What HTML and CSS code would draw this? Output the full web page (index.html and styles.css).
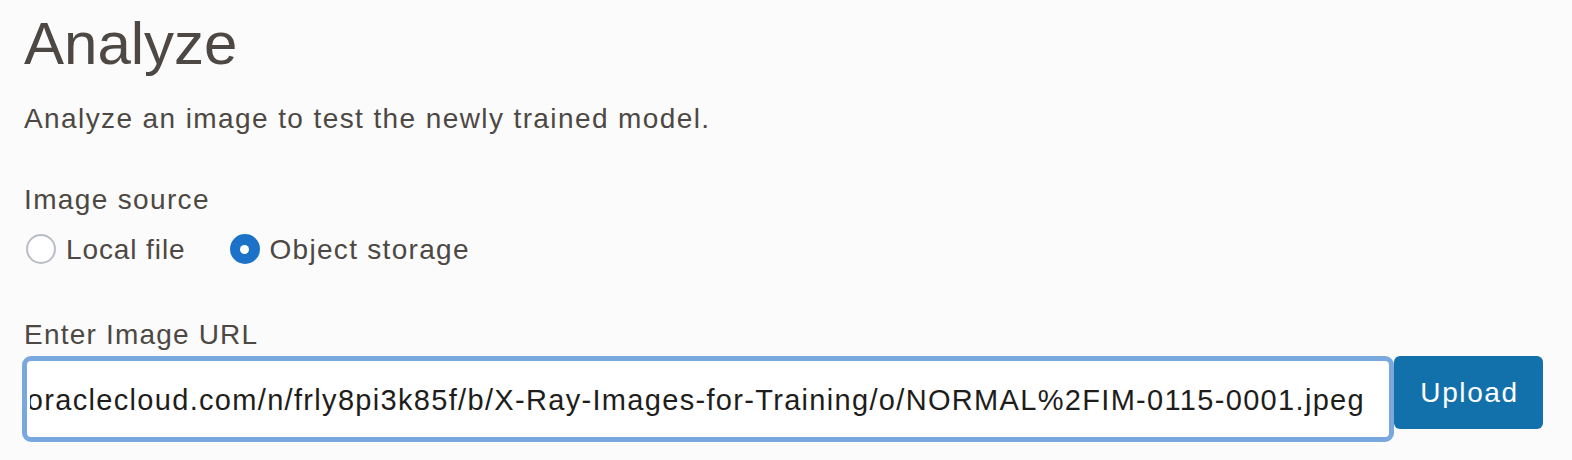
FILE: index.html
```html
<!DOCTYPE html>
<html lang="en">
<head>
<meta charset="utf-8">
<title>Analyze</title>
<link rel="stylesheet" href="styles.css">
</head>
<body>
<main class="page">
  <h1 class="title">Analyze</h1>
  <p class="subtitle">Analyze an image to test the newly trained model.</p>

  <div class="field-label source-label">Image source</div>
  <div class="radio-row">
    <label class="radio">
      <span class="radio-circle"></span>
      <span class="radio-text radio-text-tight">Local file</span>
    </label>
    <label class="radio">
      <span class="radio-circle checked"></span>
      <span class="radio-text">Object storage</span>
    </label>
  </div>

  <div class="field-label url-label">Enter Image URL</div>
  <div class="url-row">
    <div class="url-input">
      <div class="url-clip">
        <span class="url-text">https://objectstorage.us-ashburn-1.oraclecloud.com/n/frly8pi3k85f/b/X-Ray-Images-for-Training/o/NORMAL%2FIM-0115-0001.jpeg</span>
      </div>
    </div>
    <button class="upload-btn" type="button">Upload</button>
  </div>
</main>
</body>
</html>
```

FILE: styles.css
```css
html, body {
  margin: 0;
  padding: 0;
  background: #fbfbfb;
}

body {
  font-family: "Liberation Sans", Arial, sans-serif;
  color: #4d4843;
}

.page {
  padding: 14px 0 0 24px;
  width: 1548px;
  box-sizing: border-box;
}

.title {
  margin: 0;
  font-size: 60px;
  line-height: 60px;
  font-weight: 400;
  letter-spacing: 0;
}

.subtitle {
  margin: 31px 0 0;
  font-size: 28px;
  line-height: 28px;
  letter-spacing: 1.4px;
}

.field-label {
  font-size: 28px;
  line-height: 28px;
  letter-spacing: 1.2px;
}

.source-label {
  margin-top: 53px;
  letter-spacing: 1.35px;
}

.radio-row {
  display: flex;
  align-items: center;
  gap: 44px;
  margin: 20px 0 0 2px;
  height: 30px;
}

.radio {
  display: flex;
  align-items: center;
  gap: 10px;
}

.radio-circle {
  width: 30px;
  height: 30px;
  box-sizing: border-box;
  border-radius: 50%;
  border: 2px solid #b9bec6;
  background: #ffffff;
  display: flex;
  align-items: center;
  justify-content: center;
}

.radio-circle.checked {
  border: none;
  background: #1b72c8;
}

.radio-circle.checked::after {
  content: "";
  width: 9px;
  height: 9px;
  border-radius: 50%;
  background: #ffffff;
}

.radio-text {
  font-size: 28px;
  line-height: 28px;
  letter-spacing: 1.3px;
  margin-top: 2px;
}

.radio-text-tight {
  letter-spacing: 0.9px;
}

.url-label {
  margin-top: 57px;
}

.url-row {
  display: flex;
  align-items: flex-start;
  margin: 7px 0 0 -2px;
}

.url-input {
  width: 1372px;
  height: 86px;
  box-sizing: border-box;
  border: 5px solid #78a8de;
  border-radius: 9px;
  background: #ffffff;
  display: flex;
  align-items: center;
  padding: 0 24px 0 3px;
}

.url-clip {
  flex: 1;
  min-width: 0;
  display: flex;
  justify-content: flex-end;
  overflow: hidden;
}

.url-text {
  white-space: nowrap;
  font-size: 29px;
  letter-spacing: 1.32px;
  color: #1e1d1b;
  flex-shrink: 0;
  margin-top: 2px;
}

.upload-btn {
  width: 149px;
  height: 73px;
  border: none;
  border-radius: 6px;
  background: #1270ab;
  color: #ffffff;
  font-family: "Liberation Sans", Arial, sans-serif;
  font-size: 28px;
  letter-spacing: 1.6px;
  padding: 0 0 0 2px;
  cursor: pointer;
}
```
